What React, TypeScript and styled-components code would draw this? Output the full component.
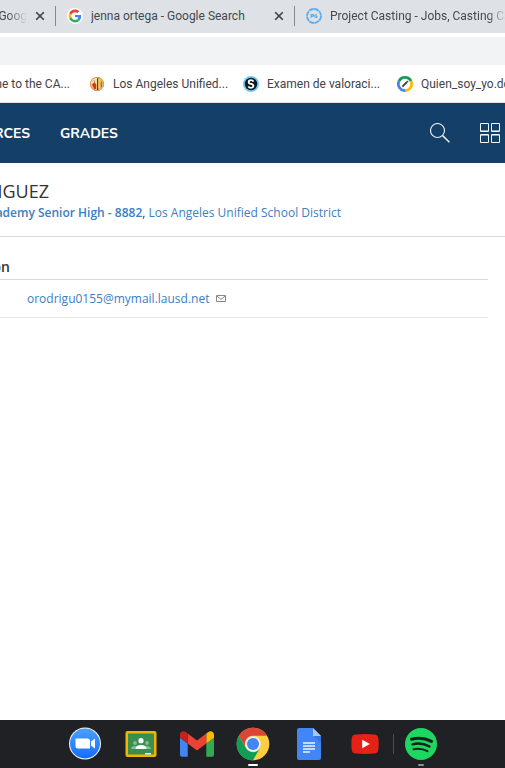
import React from 'react';
import styled, { createGlobalStyle } from 'styled-components';

const GlobalStyle = createGlobalStyle`
  * { box-sizing: border-box; }
  body { margin: 0; background: #fff; overflow: hidden; }
  button { border: 0; padding: 0; background: none; color: inherit; font: inherit; }
  a { color: inherit; text-decoration: none; }
  svg { display: block; flex: none; }
`;

const Screen = styled.div`
  display: flex;
  flex-direction: column;
  min-height: 100vh;
  overflow: hidden;
  font-family: 'Open Sans', 'Noto Sans', sans-serif;
`;

const TabStrip = styled.div`
  display: flex;
  height: 33px;
  background: #dee1e6;
  color: #45494d;
  font: 12px/16px Roboto, sans-serif;
  overflow: hidden;
`;

const Tab = styled.div<{ $width: number }>`
  flex: 0 0 ${p => p.$width}px;
  display: flex;
  align-items: center;
  height: 32px;
  min-width: 0;
`;

const TabLabel = styled.button<{ $align?: string; $fade?: boolean }>`
  display: flex;
  flex: 1;
  min-width: 0;
  justify-content: ${p => p.$align ?? 'flex-start'};
  overflow: hidden;
  white-space: nowrap;
  mask-image: ${p => (p.$fade ? 'linear-gradient(to left, transparent, #000 20px)' : 'none')};
`;

const TabIcon = styled.span`
  display: flex;
  margin: 0 8px 0 11px;
`;

const CloseButton = styled.button`
  display: flex;
  margin: 0 10px 0 8px;
`;

const TabDivider = styled.span`
  flex: 0 0 1px;
  height: 20px;
  margin-top: 6px;
  background: #85898e;
`;

const AddressBar = styled.div`
  height: 32px;
  border-top: 4px solid #fff;
  background: #f1f3f4;
`;

const Bookmarks = styled.nav`
  display: flex;
  align-items: center;
  height: 38px;
  border-bottom: 1px solid #dcdee1;
  color: #3f4347;
  font: 12px/16px Roboto, sans-serif;
  overflow: hidden;
`;

const Bookmark = styled.a<{ $width: number; $end?: boolean }>`
  flex: 0 0 ${p => p.$width}px;
  display: flex;
  align-items: center;
  justify-content: ${p => (p.$end ? 'flex-end' : 'flex-start')};
  gap: 8px;
  padding-right: ${p => (p.$end ? '19px' : '0')};
  overflow: hidden;
  white-space: nowrap;
`;

const SiteHeader = styled.header`
  display: flex;
  align-items: center;
  height: 60px;
  padding-right: 5px;
  background: #143f69;
  color: #fff;
  font: 700 14px/20px Nunito, 'Open Sans', sans-serif;
`;

const SiteLink = styled.a<{ $width?: number }>`
  display: flex;
  justify-content: flex-end;
  width: ${p => (p.$width ? `${p.$width}px` : 'auto')};
  margin-right: 30px;
  padding-top: 2px;
  overflow: hidden;
`;

const HeaderTools = styled.div`
  display: flex;
  align-items: center;
  gap: 30px;
  margin-left: auto;
`;

const IconButton = styled.button`
  display: flex;
`;

const Profile = styled.section`
  padding: 16px 0 14px;
  border-bottom: 1px solid #d9d9d9;
`;

const Clip = styled.div<{ $width: number }>`
  display: flex;
  justify-content: flex-end;
  width: ${p => p.$width}px;
  overflow: hidden;
  white-space: nowrap;
`;

const Name = styled.h1`
  margin: 0;
  color: #333;
  font: 500 18px/24px 'Open Sans', sans-serif;
`;

const Schools = styled.p`
  margin: 0;
  color: #333;
  font-size: 12px;
  line-height: 19px;
`;

const SchoolLink = styled.a<{ $strong?: boolean }>`
  color: #3b80c2;
  font-weight: ${p => (p.$strong ? 600 : 400)};
`;

const Info = styled.section`
  flex: 1;
  padding: 20px 17px 0 0;
`;

const InfoTitle = styled.h2`
  margin: 0;
  padding-bottom: 2px;
  border-bottom: 1px solid #d9d9d9;
  color: #333;
  font: 600 14px/20px 'Open Sans', sans-serif;
`;

const InfoRow = styled.div`
  display: flex;
  align-items: center;
  gap: 7px;
  height: 38px;
  padding-left: 27px;
  border-bottom: 1px solid #e8e8e8;
  color: #3b80c2;
  font-size: 12px;
  line-height: 18px;
`;

const Shelf = styled.footer`
  display: flex;
  justify-content: center;
  height: 48px;
  background: #202124;
`;

const AppButton = styled.button<{ $mark?: string }>`
  display: flex;
  align-items: center;
  justify-content: center;
  width: 56px;
  height: 48px;
  position: relative;

  &::after {
    content: '';
    display: ${p => (p.$mark ? 'block' : 'none')};
    position: absolute;
    bottom: 2px;
    left: 50%;
    width: ${p => (p.$mark === 'active' ? '10px' : '6px')};
    height: 2px;
    transform: translateX(-50%);
    border-radius: 1px;
    background: ${p => (p.$mark === 'active' ? '#fff' : '#909193')};
  }
`;

const ShelfDivider = styled.span`
  width: 1px;
  height: 20px;
  margin: 14px -1px 0 0;
  background: #4b4c4f;
`;

const Cross = () => (
  <svg width="10" height="10" viewBox="0 0 10 10" fill="none" stroke="#3c4043" strokeWidth="1.6">
    <path d="M1.2 1.2l7.6 7.6M8.8 1.2L1.2 8.8" />
  </svg>
);

const GoogleIcon = () => (
  <svg width="16" height="16" viewBox="0 0 48 48">
    <circle cx="24" cy="24" r="24" fill="#fff" />
    <g transform="translate(4.8 4.8) scale(.8)">
      <path fill="#EA4335" d="M24 9.5c3.54 0 6.71 1.22 9.21 3.6l6.85-6.85C35.9 2.38 30.47 0 24 0 14.62 0 6.51 5.38 2.56 13.22l7.98 6.19C12.43 13.72 17.74 9.5 24 9.5z" />
      <path fill="#4285F4" d="M46.98 24.55c0-1.57-.15-3.09-.38-4.55H24v9.02h12.94c-.58 2.96-2.26 5.48-4.78 7.18l7.73 6c4.51-4.18 7.09-10.36 7.09-17.65z" />
      <path fill="#FBBC05" d="M10.53 28.59c-.48-1.45-.76-2.99-.76-4.59s.27-3.14.76-4.59l-7.98-6.19C.92 16.46 0 20.12 0 24s.92 7.54 2.56 10.78l7.97-6.19z" />
      <path fill="#34A853" d="M24 48c6.48 0 11.93-2.13 15.89-5.81l-7.73-6c-2.15 1.45-4.92 2.3-8.16 2.3-6.26 0-11.57-4.22-13.47-9.91l-7.98 6.19C6.51 42.62 14.62 48 24 48z" />
    </g>
  </svg>
);

const CastingIcon = () => (
  <svg width="16" height="16" viewBox="0 0 16 16" fill="none" stroke="#5aacec">
    <circle cx="8" cy="8" r="7" strokeWidth="1.8" strokeDasharray="5 .5" />
    <path d="M5.200 10V6.600h1.300q1.200 0 1.200.9t-1.200.9H5.200M11 7q-2.200-.9-2.200 1t2.200 1.200V8.200h-.8" strokeWidth="1.100" />
  </svg>
);

const DistrictIcon = () => (
  <svg width="16" height="16" viewBox="0 0 16 16">
    <circle cx="8" cy="8" r="7" fill="#efb27c" />
    <path d="M2 5q2.500-3.300 6-3.300v6l-2 1.600-4-1z" fill="#f5dfb2" />
    <path d="M3 8.200l2.500-2 1.500 2v4.300l-1.500 1.300z" fill="#c9392b" />
    <path d="M5 4.200l1 3.500" stroke="#b76a38" strokeWidth=".8" />
    <path d="M8 2.500l1.300-.8V14L8 14.300z" fill="#444542" />
    <path d="M9.300 2.500l2.200 1v7l-1.100 3-1.100-2z" fill="#f2cf24" />
    <path d="M11.800 5l1.200 1.300v4l-1.200 1.500z" fill="#4d8295" />
    <circle cx="8" cy="8" r="6.700" fill="none" stroke="#dc9b4b" />
  </svg>
);

const SchoologyIcon = () => (
  <svg width="16" height="16" viewBox="0 0 16 16">
    <circle cx="8" cy="8" r="8" fill="#72c8ec" />
    <circle cx="8" cy="8" r="6.200" fill="#101820" />
    <path d="M10.500 5.600Q9.800 4.200 8 4.200q-2.300 0-2.300 1.700T8 7.900t2.400 2-2.400 1.900q-2 0-2.700-1.500" fill="none" stroke="#fff" strokeWidth="1.8" />
  </svg>
);

const EditIcon = () => (
  <svg width="16" height="16" viewBox="0 0 16 16" fill="none">
    <circle cx="8" cy="8" r="7" fill="#fff" />
    <path d="M2 5.200A6.600 6.600 0 0 1 14 5.200" stroke="#179c58" strokeWidth="2.800" />
    <path d="M14 5.200A6.600 6.600 0 0 1 8.500 14.600" stroke="#fbbc05" strokeWidth="2.800" />
    <path d="M8.500 14.600A6.600 6.600 0 0 1 2 5.200" stroke="#4285f4" strokeWidth="2.800" />
    <path d="M5.400 10.600L10 6" stroke="#3d4043" strokeWidth="1.800" />
    <path d="M10.100 5.900l.8-.8" stroke="#3d4043" strokeWidth="1.800" />
  </svg>
);

const SearchIcon = () => (
  <svg width="20" height="20" viewBox="0 0 20 20" fill="none" stroke="#e9eef3">
    <circle cx="7.500" cy="7.500" r="7" strokeWidth="1.100" />
    <path d="M12.600 12.600l6.800 6.600" strokeWidth="1.500" />
  </svg>
);

const GridIcon = () => (
  <svg width="20" height="20" viewBox="0 0 20 20" fill="none" stroke="#f2f5f8">
    <path d="M.5.5h8v8h-8zM11.500.5h8v8h-8zM.5 11.500h8v8h-8zM11.500 11.500h8v8h-8z" />
    <path d="M1 7.500h7M12 7.500h7M1 12.500h7M12 12.500h7" stroke="#8fa5ba" />
  </svg>
);

const MailIcon = () => (
  <svg width="10" height="7" viewBox="0 0 10 7" fill="none" stroke="#888">
    <path d="M.5.5h9v6h-9zM.8 1L5 4.300 9.200 1" />
  </svg>
);

const ZoomIcon = () => (
  <svg width="34" height="34" viewBox="0 0 34 34">
    <defs>
      <linearGradient id="zoomBlue" x2="0" y2="1">
        <stop stopColor="#4ba0ff" />
        <stop offset="1" stopColor="#146dfa" />
      </linearGradient>
    </defs>
    <circle cx="17" cy="16.500" r="16" fill="#f4f6f8" />
    <circle cx="17" cy="16.500" r="15" fill="url(#zoomBlue)" />
    <path d="M7.500 11.500h12q2.500 0 2.500 2.500v7.500H10q-2.500 0-2.500-2.500zM23 14.500l4-3v10l-4-3z" fill="#fff" />
  </svg>
);

const ClassroomIcon = () => (
  <svg width="32" height="26" viewBox="0 0 32 26">
    <rect x=".5" width="31" height="26" rx="2" fill="#f4b400" />
    <rect x="3" y="2.500" width="26" height="21" fill="#388f50" />
    <g fill="#85bd91">
      <circle cx="10" cy="12" r="1.900" />
      <circle cx="22" cy="12" r="1.900" />
      <path d="M6 18q0-3 4-3t4 3zM18 18q0-3 4-3t4 3z" />
    </g>
    <circle cx="16" cy="9.700" r="2.600" fill="#fff" />
    <path d="M10.500 18q0-4 5.500-4t5.500 4z" fill="#fff" />
    <path d="M20 22h6v1.500h-6z" fill="#eee" />
  </svg>
);

const GmailIcon = () => (
  <svg width="34" height="26" viewBox="52 42 88 66">
    <path fill="#4285f4" d="M58 108h14V74L52 59v43c0 3.320 2.690 6 6 6" />
    <path fill="#34a853" d="M120 108h14c3.320 0 6-2.690 6-6V59l-20 15" />
    <path fill="#fbbc04" d="M120 48v26l20-15v-8c0-7.420-8.470-11.650-14.400-7.200" />
    <path fill="#ea4335" d="M72 74V48l24 18 24-18v26L96 92" />
    <path fill="#c5221f" d="M52 51v8l20 15V48l-5.600-4.200c-5.940-4.450-14.400-.22-14.400 7.200" />
  </svg>
);

const ChromeIcon = () => (
  <svg width="34" height="34" viewBox="0 0 48 48">
    <circle cx="24" cy="24" r="23" fill="#ffcd40" />
    <path d="M4.080 12.500A23 23 0 0 1 43.920 12.500H24A11.500 11.500 0 0 0 14.040 29.750z" fill="#db4437" />
    <path d="M4.080 12.500A23 23 0 0 0 24 47l9.960-17.250A11.500 11.500 0 0 1 14.040 29.750z" fill="#0f9d58" />
    <circle cx="24" cy="24" r="11" fill="#f1f1f1" />
    <circle cx="24" cy="24" r="8.500" fill="#4285f4" />
  </svg>
);

const DocsIcon = () => (
  <svg width="24" height="32" viewBox="0 0 24 32">
    <path d="M2 0h14l8 8v22q0 2-2 2H2q-2 0-2-2V2q0-2 2-2z" fill="#4285f4" />
    <path d="M16 0l8 8h-8z" fill="#a9c7fa" />
    <path d="M17 8h7v7z" fill="#3a75dc" />
    <path d="M6 15h12M6 18h12M6 21h12M6 24h7" stroke="#f1f5fe" strokeWidth="1.600" />
  </svg>
);

const YouTubeIcon = () => (
  <svg width="28" height="20" viewBox="0 0 28 20">
    <path d="M5 .5Q14-.3 23 .5q4 .2 4.300 4 .7 5.500 0 11-.3 3.800-4.300 4-9 .8-18 0-4-.2-4.300-4-.7-5.500 0-11Q1 .7 5 .5z" fill="#e62117" />
    <path d="M11.200 5.800l7.600 4.200-7.600 4.200z" fill="#fff" />
  </svg>
);

const SpotifyIcon = () => (
  <svg width="32" height="32" viewBox="0 0 32 32" fill="none" stroke="#152019" strokeLinecap="round">
    <circle cx="16" cy="16" r="16" fill="#1ed760" stroke="none" />
    <path d="M6.500 11.200q10.500-2.800 20 2.200" strokeWidth="3" />
    <path d="M7.500 16.300q9-2.300 17 2.200" strokeWidth="2.400" />
    <path d="M8.500 21.200q7.300-1.700 14 2" strokeWidth="2" />
  </svg>
);

export default function App() {
  return (
    <Screen>
      <GlobalStyle />
      <TabStrip>
        <Tab $width={55}>
          <TabLabel $align="flex-end" $fade>Goog</TabLabel>
          <CloseButton aria-label="Close tab"><Cross /></CloseButton>
        </Tab>
        <TabDivider />
        <Tab $width={238}>
          <TabIcon><GoogleIcon /></TabIcon>
          <TabLabel>jenna ortega - Google Search</TabLabel>
          <CloseButton aria-label="Close tab"><Cross /></CloseButton>
        </Tab>
        <TabDivider />
        <Tab $width={212}>
          <TabIcon><CastingIcon /></TabIcon>
          <TabLabel $fade>Project Casting - Jobs, Casting Calls</TabLabel>
        </Tab>
      </TabStrip>
      <AddressBar />
      <Bookmarks aria-label="Bookmarks">
        <Bookmark href="#" $width={89} $end>me to the CA...</Bookmark>
        <Bookmark href="#" $width={154}><DistrictIcon />Los Angeles Unified...</Bookmark>
        <Bookmark href="#" $width={154}><SchoologyIcon />Examen de valoraci...</Bookmark>
        <Bookmark href="#" $width={154}><EditIcon />Quien_soy_yo.docx</Bookmark>
      </Bookmarks>
      <SiteHeader>
        <SiteLink href="#" $width={30}>RCES</SiteLink>
        <SiteLink href="#">GRADES</SiteLink>
        <HeaderTools>
          <IconButton aria-label="Search"><SearchIcon /></IconButton>
          <IconButton aria-label="Apps"><GridIcon /></IconButton>
        </HeaderTools>
      </SiteHeader>
      <Profile>
        <Clip $width={49}><Name>IGUEZ</Name></Clip>
        <Clip $width={341}>
          <Schools>
            <SchoolLink href="#" $strong>ademy Senior High - 8882</SchoolLink>, <SchoolLink href="#">Los Angeles Unified School District</SchoolLink>
          </Schools>
        </Clip>
      </Profile>
      <Info>
        <InfoTitle><Clip $width={10}>on</Clip></InfoTitle>
        <InfoRow><a href="#">orodrigu0155@mymail.lausd.net</a><MailIcon /></InfoRow>
      </Info>
      <Shelf>
        <AppButton aria-label="Zoom"><ZoomIcon /></AppButton>
        <AppButton aria-label="Classroom"><ClassroomIcon /></AppButton>
        <AppButton aria-label="Gmail"><GmailIcon /></AppButton>
        <AppButton aria-label="Chrome" $mark="active"><ChromeIcon /></AppButton>
        <AppButton aria-label="Docs"><DocsIcon /></AppButton>
        <AppButton aria-label="YouTube"><YouTubeIcon /></AppButton>
        <ShelfDivider />
        <AppButton aria-label="Spotify" $mark="open"><SpotifyIcon /></AppButton>
      </Shelf>
    </Screen>
  );
}
